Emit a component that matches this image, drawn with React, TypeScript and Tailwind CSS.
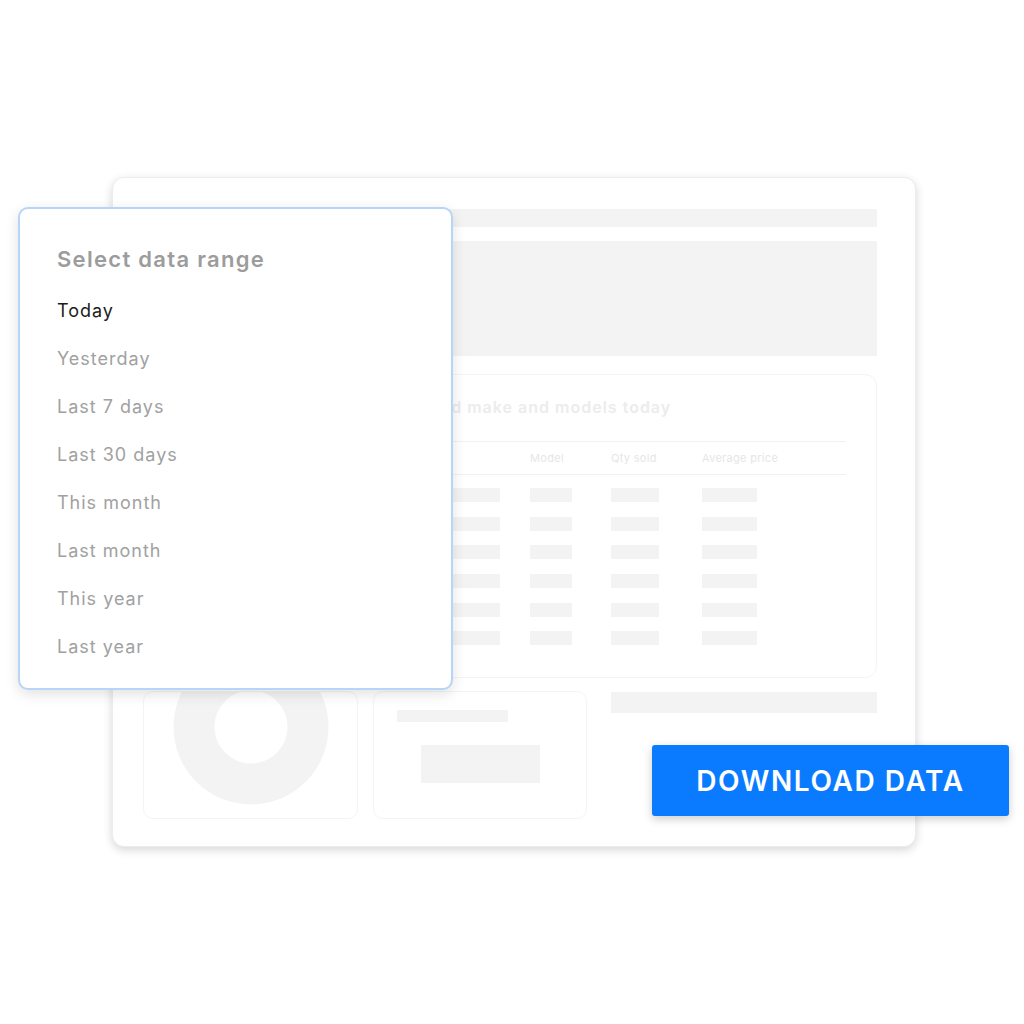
import React from 'react'

const ranges = ['Yesterday', 'Last 7 days', 'Last 30 days', 'This month', 'Last month', 'This year', 'Last year']

// placeholder rows in the background table
const rowCount = [0, 1, 2, 3, 4, 5]

function Bar({ className }: { className: string }) {
  return <div className={`bg-[#f3f3f3] ${className}`} />
}

export default function App() {
  return (
    <div
      className="relative w-[1024px] h-[1024px] bg-white overflow-hidden"
      style={{ fontFamily: 'Inter, "Noto Sans", sans-serif' }}
    >
      {/* dashboard in the back */}
      <div className="ml-[112px] mt-[177px] w-[804px] h-[670px] rounded-[12px] bg-white border border-[#ececec] shadow-[0_3px_10px_rgba(0,0,0,0.16)] pl-[32px] pr-[38px] pt-[31px] flex flex-col">
        <Bar className="h-[18px] w-full" />
        <Bar className="h-[115px] w-full mt-[14px]" />

        {/* table card */}
        <div className="mt-[18px] h-[304px] rounded-[12px] border border-[#f4f4f4] px-[30px] flex flex-col">
          <div className="mt-[22px] h-[20px] text-[16px] font-semibold tracking-[1px] text-[#ececec] leading-[20px] pl-[206px]">
            Best sold make and models today
          </div>
          <div className="mt-[24px] border-t border-[#f1f1f1]" />
          <div className="h-[32px] flex items-center text-[11px] tracking-[0.3px] text-[#e6e6e6]">
            <div className="w-[354px]">Make</div>
            <div className="w-[81px]">Model</div>
            <div className="w-[91px]">Qty sold</div>
            <div>Average price</div>
          </div>
          <div className="border-t border-[#f1f1f1]" />
          <div className="mt-[13px] flex flex-col gap-[14.7px]">
            {rowCount.map((r) => (
              <div key={r} className="flex h-[14px]">
                <div className="w-[354px] flex justify-end pr-[30px]">
                  <Bar className="w-[60px] h-full" />
                </div>
                <div className="w-[81px]">
                  <Bar className="w-[42px] h-full" />
                </div>
                <div className="w-[91px]">
                  <Bar className="w-[48px] h-full" />
                </div>
                <Bar className="w-[55px] h-full" />
              </div>
            ))}
          </div>
        </div>

        {/* bottom row */}
        <div className="mt-[13px] flex h-[128px]">
          <div className="-ml-[2px] w-[215px] h-full rounded-[10px] border border-[#f4f4f4] relative overflow-hidden">
            <svg width="215" height="128" viewBox="0 0 215 128" className="absolute left-0 top-0">
              <circle cx="107" cy="35" r="57" fill="none" stroke="#f3f3f3" strokeWidth="41" />
            </svg>
          </div>
          <div className="ml-[15px] w-[214px] h-full rounded-[10px] border border-[#f4f4f4] pl-[23px] pt-[18px] flex flex-col">
            <Bar className="w-[111px] h-[12px]" />
            <Bar className="w-[119px] h-[38px] mt-[23px] ml-[24px]" />
          </div>
          <Bar className="ml-[24px] flex-1 h-[21px] mt-[1px]" />
        </div>
      </div>

      {/* date range popup */}
      <div className="absolute left-[18px] top-[207px] w-[435px] h-[483px] rounded-[10px] bg-white border-2 border-[#b7d5f6] shadow-[0_4px_14px_rgba(0,0,0,0.12)] pl-[37px] pt-[36px]">
        <div className="text-[22px] leading-[28px] font-semibold tracking-[1.3px] text-[#9c9c9c]">Select data range</div>
        <div className="mt-[26px] text-[18px] leading-[24px] tracking-[1px] text-[#1c1c1c]">Today</div>
        <div className="flex flex-col">
          {ranges.map((r) => (
            <div key={r} className="mt-[24px] text-[18px] leading-[24px] tracking-[1px] text-[#a1a1a1]">
              {r}
            </div>
          ))}
        </div>
      </div>

      {/* download button */}
      <div className="absolute left-[652px] top-[745px] w-[357px] h-[71px] bg-[#0a7bff] rounded-[3px] shadow-[0_3px_10px_rgba(0,0,0,0.2)] flex items-center justify-center text-white text-[28px] font-semibold tracking-[1.6px]">
        DOWNLOAD DATA
      </div>
    </div>
  )
}
